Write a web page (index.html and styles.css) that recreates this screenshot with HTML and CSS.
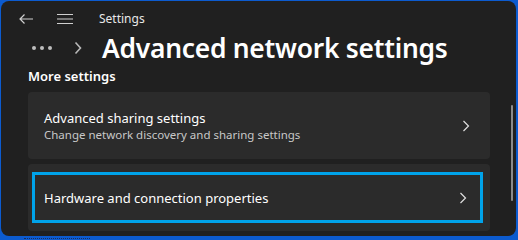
FILE: index.html
```html
<!DOCTYPE html>
<html>
<head>
<meta charset="utf-8">
<link rel="stylesheet" href="styles.css">
</head>
<body>
<div class="window">
  <div class="titlebar">
    <svg class="back" width="16" height="12" viewBox="0 0 16 12"><path d="M15 6H2M6.5 1.5L2 6l4.5 4.5" fill="none" stroke="#cfcfcf" stroke-width="1.2"/></svg>
    <svg class="menu" width="16" height="12" viewBox="0 0 16 12"><path d="M0 1.5H16M0 6H16M0 10.5H16" fill="none" stroke="#cfcfcf" stroke-width="1.2"/></svg>
    <span class="app">Settings</span>
  </div>
  <div class="crumbs">
    <span class="dots"><i></i><i></i><i></i></span>
    <svg class="sep" width="8" height="14" viewBox="0 0 8 14"><path d="M1.5 1.5L6.5 7l-5 5.5" fill="none" stroke="#b8b8b8" stroke-width="1.6"/></svg>
    <h1 class="title">Advanced network settings</h1>
  </div>
  <h2 class="section">More settings</h2>
  <div class="card card-tall">
    <div class="card-text">
      <div class="card-title">Advanced sharing settings</div>
      <div class="card-sub">Change network discovery and sharing settings</div>
    </div>
    <svg class="chev" width="8" height="12" viewBox="0 0 8 12"><path d="M1.5 1L6.5 6l-5 5" fill="none" stroke="#e0e0e0" stroke-width="1.2"/></svg>
  </div>
  <div class="card card-short">
    <div class="highlight">
      <div class="card-title">Hardware and connection properties</div>
      <svg class="chev" width="8" height="12" viewBox="0 0 8 12"><path d="M1.5 1L6.5 6l-5 5" fill="none" stroke="#e0e0e0" stroke-width="1.2"/></svg>
    </div>
  </div>
  <div class="scrollbar"></div>
</div>
<div class="behind"></div>
</body>
</html>
```
FILE: styles.css
```css
html, body {
  margin: 0;
  padding: 0;
  width: 518px;
  height: 240px;
  overflow: hidden;
  background: #0c5bcf;
  font-family: "Noto Sans", "Open Sans", sans-serif;
}
.window {
  position: relative;
  margin: 1px 2px 0 1px;
  height: 235px;
  background: #202020;
  border-radius: 8px;
  color: #fff;
  overflow: hidden;
}
.titlebar {
  display: flex;
  align-items: center;
  height: 36px;
}
.back { margin-left: 17px; }
.menu { margin-left: 23px; }
.app {
  margin-left: 26px;
  font-size: 12px;
  color: #e8e8e8;
  line-height: 16px;
}
.crumbs {
  display: flex;
  align-items: center;
  height: 22px;
}
.dots {
  display: flex;
  gap: 4px;
  margin-left: 31px;
}
.dots i {
  width: 4px;
  height: 4px;
  border-radius: 50%;
  background: #bdbdbd;
}
.sep { margin-left: 22px; }
.title {
  margin: 0 0 0 20px;
  font-size: 26.4px;
  font-weight: 600;
  line-height: 22px;
  letter-spacing: -0.25px;
  color: #fff;
}
.section {
  margin: 8px 0 0 27px;
  font-size: 13px;
  font-weight: 600;
  line-height: 18px;
  color: #fff;
}
.card {
  margin: 7px 26px 0 27px;
  background: #2b2b2b;
  border-radius: 4px;
  display: flex;
  align-items: center;
}
.card-tall {
  height: 67px;
  padding: 0 20px 0 16px;
  justify-content: space-between;
}
.card-tall .card-text { margin-top: 2px; }
.card-short {
  margin-top: 5px;
  height: 67px;
  padding: 0 7px 0 4px;
}
.highlight {
  flex: 1;
  height: 45px;
  border: 3px solid #00a3ea;
  display: flex;
  align-items: center;
  justify-content: space-between;
  padding: 0 13px 0 9px;
}
.highlight .card-title { margin-top: 2px; }
.card-title {
  font-size: 13px;
  line-height: 17px;
  color: #fff;
}
.card-sub {
  font-size: 11.5px;
  line-height: 16px;
  color: #c8c8c8;
}
.scrollbar {
  position: absolute;
  left: 510px;
  top: 104px;
  width: 2px;
  height: 96px;
  background: #8c8c8c;
  border-radius: 1px;
}
.behind {
  margin: 2px 0 0 24px;
  width: 66px;
  border-top: 1px dotted #1c2c5a;
}
```
